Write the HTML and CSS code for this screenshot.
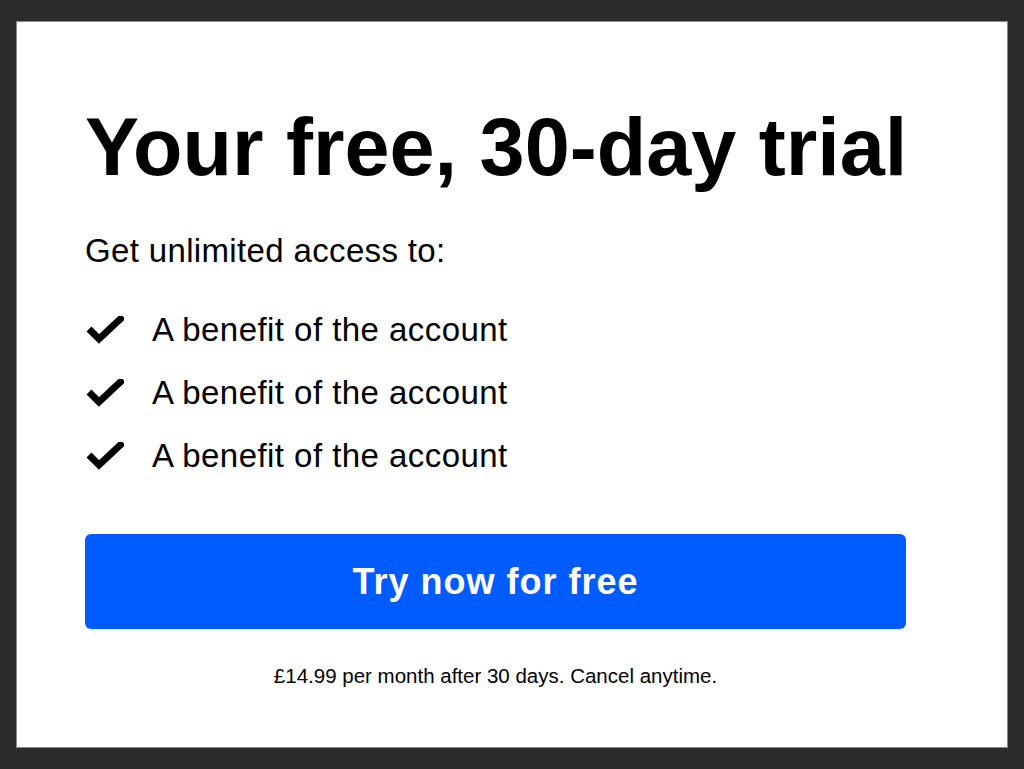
FILE: index.html
```html
<!DOCTYPE html>
<html lang="en">
<head>
    <meta charset="UTF-8">
    <meta name="viewport" content="width=device-width, initial-scale=1.0">
    <title>Free trial</title>
    <link rel="stylesheet" href="styles.css">
</head>
<body>
    <div class="card">
        <div class="content">
            <h1>Your free, 30-day trial</h1>
            <p class="intro">Get unlimited access to:</p>
            <ul class="benefits">
                <li>
                    <svg class="check" viewBox="0 0 38 28"><path d="M3 13 L13 23 L37 0.5" /></svg>
                    A benefit of the account
                </li>
                <li>
                    <svg class="check" viewBox="0 0 38 28"><path d="M3 13 L13 23 L37 0.5" /></svg>
                    A benefit of the account
                </li>
                <li>
                    <svg class="check" viewBox="0 0 38 28"><path d="M3 13 L13 23 L37 0.5" /></svg>
                    A benefit of the account
                </li>
            </ul>
            <button class="cta">Try now for free</button>
            <p class="small">£14.99 per month after 30 days. Cancel anytime.</p>
        </div>
    </div>
</body>
</html>
```

FILE: styles.css
```css
html, body {
    height: 100%;
}
body {
    margin: 0;
    padding: 21px 16px 21px 16px;
    box-sizing: border-box;
    background-color: #2b2b2b;
    font-family: 'Liberation Sans', Arial, sans-serif;
    color: #000;
}
.card {
    height: 100%;
    box-sizing: border-box;
    background: #fff;
    border: 1px solid #8a8a8a;
    padding: 75px 100px 0 68px;
}
.content {
    width: 821px;
}
h1 {
    margin: 0;
    font-size: 81px;
    font-weight: bold;
    line-height: 100px;
    white-space: nowrap;
}
.intro {
    margin: 34px 0 0 0;
    font-size: 33px;
    line-height: 40px;
    letter-spacing: 0.35px;
}
.benefits {
    list-style: none;
    margin: 27px 0 0 0;
    padding: 0;
}
.benefits li {
    display: flex;
    align-items: center;
    gap: 28px;
    height: 63px;
    line-height: 63px;
    font-size: 33px;
    letter-spacing: 0.45px;
}
.check {
    flex: none;
    width: 38px;
    height: 28px;
    margin-left: 1px;
    fill: none;
    stroke: #000;
    stroke-width: 7;
    stroke-linejoin: miter;
}
.cta {
    display: block;
    width: 100%;
    height: 95px;
    margin-top: 47px;
    padding: 0;
    border: none;
    border-radius: 6px;
    background-color: #005cff;
    color: #fff;
    font-family: inherit;
    font-size: 36px;
    font-weight: bold;
    letter-spacing: 1px;
}
.small {
    margin: 35px 0 0 0;
    text-align: center;
    font-size: 20.5px;
    line-height: 24px;
}
```
